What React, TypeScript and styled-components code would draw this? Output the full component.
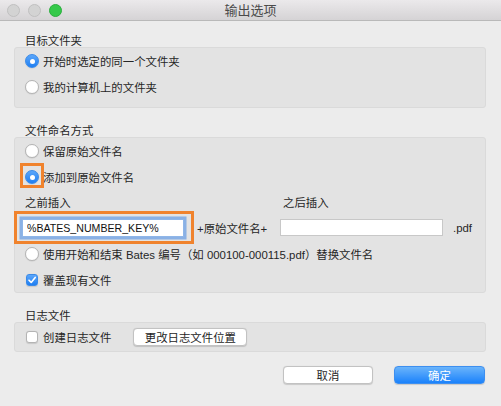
import styled, { createGlobalStyle } from "styled-components"

const GlobalStyle = createGlobalStyle`
    html, body {
        margin: 0;
        padding: 0;
        background: #ececec;
    }
    body {
        font-family: "Liberation Sans", "Noto Sans CJK SC", sans-serif;
        font-size: 11.4px;
        color: #262626;
    }
`

export default function App() {
    return (
        <>
            <GlobalStyle />
            <Window>
                <TitleBar>
                    <Lights>
                        <Light />
                        <Light />
                        <Light $active />
                    </Lights>
                    <Title>输出选项</Title>
                </TitleBar>

                <Content>
                    <SectionLabel $top={13}>目标文件夹</SectionLabel>
                    <Group $padBottom={7}>
                        <Row>
                            <Radio $checked />
                            <span>开始时选定的同一个文件夹</span>
                        </Row>
                        <Row>
                            <Radio />
                            <span>我的计算机上的文件夹</span>
                        </Row>
                    </Group>

                    <SectionLabel $top={16}>文件命名方式</SectionLabel>
                    <Group>
                        <Row>
                            <Radio />
                            <span>保留原始文件名</span>
                        </Row>
                        <Row>
                            <RadioMark>
                                <Radio $checked />
                            </RadioMark>
                            <span>添加到原始文件名</span>
                        </Row>
                        <InsertGrid>
                            <InsertLabel>之前插入</InsertLabel>
                            <span />
                            <InsertLabel>之后插入</InsertLabel>
                            <span />
                            <InputMark>
                                <TextField $focused defaultValue="%BATES_NUMBER_KEY%" />
                            </InputMark>
                            <span>+原始文件名+</span>
                            <TextField defaultValue="" />
                            <span>.pdf</span>
                        </InsertGrid>
                        <Row $height={26}>
                            <Radio />
                            <span>使用开始和结束 Bates 编号（如 000100-000115.pdf）替换文件名</span>
                        </Row>
                        <Row $height={25}>
                            <Checkbox $checked>
                                <svg width="10" height="10" viewBox="0 0 10 10">
                                    <path d="M2 5.2 L4.2 7.4 L8.2 2.4" fill="none" stroke="#fff" strokeWidth="1.6" strokeLinecap="round" strokeLinejoin="round" />
                                </svg>
                            </Checkbox>
                            <span>覆盖现有文件</span>
                        </Row>
                    </Group>

                    <SectionLabel $top={16}>日志文件</SectionLabel>
                    <Group>
                        <Row $height={28}>
                            <Checkbox />
                            <span>创建日志文件</span>
                            <PushButton $width={114} $left={18}>更改日志文件位置</PushButton>
                        </Row>
                    </Group>

                    <Footer>
                        <PushButton $width={90}>取消</PushButton>
                        <PushButton $width={91} $primary>确定</PushButton>
                    </Footer>
                </Content>
            </Window>
        </>
    )
}

const Window = styled.div`
    width: 501px;
    height: 406px;
    background: #ececec;
    overflow: hidden;
`

const TitleBar = styled.div`
    height: 20px;
    border-bottom: 1px solid #b9b9b9;
    background: linear-gradient(#ebe9eb, #d5d3d5);
    position: relative;
    display: flex;
    align-items: center;
    justify-content: center;
`

const Lights = styled.div`
    position: absolute;
    left: 7px;
    top: 4px;
    display: flex;
    gap: 8px;
`

const Light = styled.div<{ $active?: boolean }>`
    width: 11px;
    height: 11px;
    border-radius: 50%;
    background: ${props => props.$active ? "#35c94a" : "#d3d3d3"};
    border: 0.5px solid ${props => props.$active ? "#2aae3d" : "#c0c0c0"};
`

const Title = styled.div`
    font-family: "Noto Sans CJK SC", sans-serif;
    font-size: 13px;
    color: #4a4a4a;
    line-height: 20px;
`

const Content = styled.div`
    padding: 0 15px 0 14px;
    display: flex;
    flex-direction: column;
`

const SectionLabel = styled.div<{ $top: number }>`
    margin-top: ${props => props.$top}px;
    padding-left: 11px;
    line-height: 13px;
    height: 13px;
    font-family: "Noto Sans CJK SC", sans-serif;
`

const Group = styled.div<{ $padBottom?: number }>`
    background: #e3e3e3;
    border: 1px solid #dadada;
    border-radius: 3px;
    padding-bottom: ${props => props.$padBottom || 0}px;
    display: flex;
    flex-direction: column;
`

const Row = styled.div<{ $height?: number }>`
    height: ${props => props.$height || 26}px;
    display: flex;
    align-items: center;
    padding-left: 10px;
    gap: 4px;
    white-space: nowrap;
`

const Radio = styled.div<{ $checked?: boolean }>`
    width: 14px;
    height: 14px;
    box-sizing: border-box;
    border-radius: 50%;
    flex-shrink: 0;
    position: relative;
    background: ${props => props.$checked ? "linear-gradient(#5ba6fa, #1f7ff2)" : "#fff"};
    border: 1px solid ${props => props.$checked ? "#3a8ae8" : "#b4b4b4"};
    box-shadow: 0 0.5px 1px rgba(0, 0, 0, 0.12);

    &::after {
        content: "";
        display: ${props => props.$checked ? "block" : "none"};
        position: absolute;
        left: 50%;
        top: 50%;
        width: 5px;
        height: 5px;
        margin: -2.5px 0 0 -2.5px;
        border-radius: 50%;
        background: #fff;
    }
`

const RadioMark = styled.div`
    position: relative;
    display: flex;

    &::after {
        content: "";
        position: absolute;
        left: -5px;
        top: -7px;
        width: 24px;
        height: 25px;
        box-sizing: border-box;
        border: 3px solid #f0832d;
    }
`

const Checkbox = styled.div<{ $checked?: boolean }>`
    width: 12px;
    height: 12px;
    box-sizing: border-box;
    margin-left: 1px;
    margin-right: 1px;
    border-radius: 3px;
    flex-shrink: 0;
    display: flex;
    align-items: center;
    justify-content: center;
    background: ${props => props.$checked ? "linear-gradient(#5ba6fa, #1f7ff2)" : "#fff"};
    border: 1px solid ${props => props.$checked ? "#3a8ae8" : "#b4b4b4"};
    box-shadow: 0 0.5px 1px rgba(0, 0, 0, 0.12);
`

const InsertGrid = styled.div`
    display: grid;
    grid-template-columns: 175px 83px 173px auto;
    grid-template-rows: 24px 27px;
    align-items: center;
    padding-left: 7px;
    white-space: nowrap;
`

const InsertLabel = styled.span`
    padding-left: 3px;
    font-family: "Noto Sans CJK SC", sans-serif;
`

const InputMark = styled.div`
    position: relative;
    display: flex;

    &::after {
        content: "";
        position: absolute;
        left: -8px;
        top: -8px;
        width: 180px;
        height: 33px;
        box-sizing: border-box;
        border: 3px solid #f0832d;
        pointer-events: none;
    }
`

const TextField = styled.input<{ $focused?: boolean }>`
    width: ${props => props.$focused ? 162 : 163}px;
    height: ${props => props.$focused ? 18 : 17}px;
    box-sizing: border-box;
    margin: 0;
    padding: 0 4px;
    border: 1px solid ${props => props.$focused ? "#8fb6e8" : "#c8c8c8"};
    background: #fff;
    font-family: "Liberation Sans", sans-serif;
    font-size: 10.6px;
    color: #111;
    outline: none;
    box-shadow: ${props => props.$focused ? "0 0 0 2.5px rgba(108, 160, 230, 0.75)" : "none"};
`

const PushButton = styled.div<{ $width: number, $left?: number, $primary?: boolean }>`
    width: ${props => props.$width}px;
    height: 18px;
    margin-left: ${props => props.$left || 0}px;
    box-sizing: border-box;
    display: flex;
    align-items: center;
    justify-content: center;
    border-radius: 4px;
    font-family: "Noto Sans CJK SC", sans-serif;
    font-size: 11.4px;
    color: ${props => props.$primary ? "#fff" : "#262626"};
    background: ${props => props.$primary ? "linear-gradient(#6ab4fb, #1b82fb)" : "#fff"};
    border: 0.5px solid ${props => props.$primary ? "#3d8ff0" : "#c2c2c2"};
    box-shadow: 0 0.5px 1px rgba(0, 0, 0, 0.15);
`

const Footer = styled.div`
    margin-top: 14px;
    display: flex;
    justify-content: flex-end;
    gap: 21px;
    padding-right: 1px;
`
